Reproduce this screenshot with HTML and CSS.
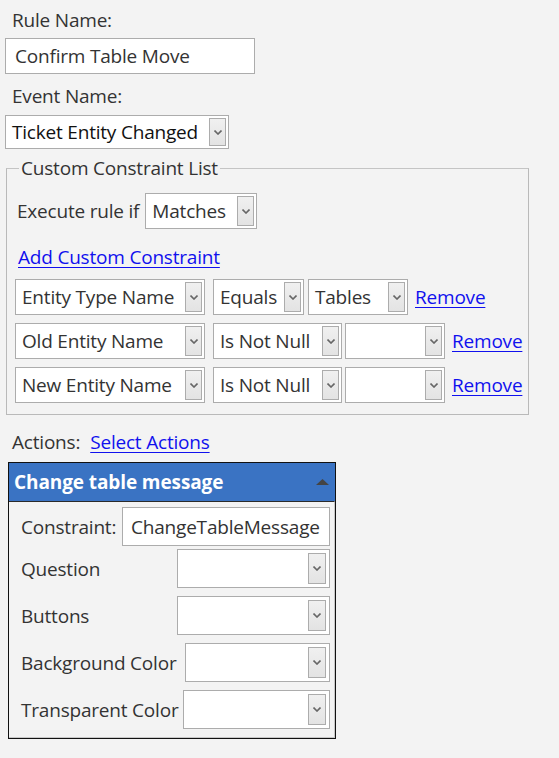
FILE: index.html
```html
<!DOCTYPE html>
<html>
<head>
<meta charset="utf-8">
<link rel="stylesheet" href="styles.css">
</head>
<body>
<div class="page">
  <div class="label l-rule">Rule Name:</div>
  <div class="input rule-input">Confirm Table Move</div>
  <div class="label l-event">Event Name:</div>
  <div class="select event-select"><span class="val">Ticket Entity Changed</span><span class="btn"><svg viewBox="0 0 8 5" width="8" height="5"><path d="M0.5 0.5 L4 4 L7.5 0.5" fill="none" stroke="#666" stroke-width="1.6"/></svg></span></div>

  <fieldset class="constraints">
    <legend>Custom Constraint List</legend>
    <div class="exec-row">
      <span class="exec-label">Execute rule if</span>
      <div class="select exec-select"><span class="val">Matches</span><span class="btn"><svg viewBox="0 0 8 5" width="8" height="5"><path d="M0.5 0.5 L4 4 L7.5 0.5" fill="none" stroke="#666" stroke-width="1.6"/></svg></span></div>
    </div>
    <a class="link add-link" href="#">Add Custom Constraint</a>
    <div class="rows">
      <div class="crow">
        <div class="select s-name"><span class="val">Entity Type Name</span><span class="btn"><svg viewBox="0 0 8 5" width="8" height="5"><path d="M0.5 0.5 L4 4 L7.5 0.5" fill="none" stroke="#666" stroke-width="1.6"/></svg></span></div>
        <div class="select s-op-eq"><span class="val">Equals</span><span class="btn"><svg viewBox="0 0 8 5" width="8" height="5"><path d="M0.5 0.5 L4 4 L7.5 0.5" fill="none" stroke="#666" stroke-width="1.6"/></svg></span></div>
        <div class="select s-value"><span class="val">Tables</span><span class="btn"><svg viewBox="0 0 8 5" width="8" height="5"><path d="M0.5 0.5 L4 4 L7.5 0.5" fill="none" stroke="#666" stroke-width="1.6"/></svg></span></div>
        <a class="link remove" href="#">Remove</a>
      </div>
      <div class="crow">
        <div class="select s-name"><span class="val">Old Entity Name</span><span class="btn"><svg viewBox="0 0 8 5" width="8" height="5"><path d="M0.5 0.5 L4 4 L7.5 0.5" fill="none" stroke="#666" stroke-width="1.6"/></svg></span></div>
        <div class="select s-op-null"><span class="val">Is Not Null</span><span class="btn"><svg viewBox="0 0 8 5" width="8" height="5"><path d="M0.5 0.5 L4 4 L7.5 0.5" fill="none" stroke="#666" stroke-width="1.6"/></svg></span></div>
        <div class="select s-value"><span class="val"></span><span class="btn"><svg viewBox="0 0 8 5" width="8" height="5"><path d="M0.5 0.5 L4 4 L7.5 0.5" fill="none" stroke="#666" stroke-width="1.6"/></svg></span></div>
        <a class="link remove" href="#">Remove</a>
      </div>
      <div class="crow">
        <div class="select s-name"><span class="val">New Entity Name</span><span class="btn"><svg viewBox="0 0 8 5" width="8" height="5"><path d="M0.5 0.5 L4 4 L7.5 0.5" fill="none" stroke="#666" stroke-width="1.6"/></svg></span></div>
        <div class="select s-op-null"><span class="val">Is Not Null</span><span class="btn"><svg viewBox="0 0 8 5" width="8" height="5"><path d="M0.5 0.5 L4 4 L7.5 0.5" fill="none" stroke="#666" stroke-width="1.6"/></svg></span></div>
        <div class="select s-value"><span class="val"></span><span class="btn"><svg viewBox="0 0 8 5" width="8" height="5"><path d="M0.5 0.5 L4 4 L7.5 0.5" fill="none" stroke="#666" stroke-width="1.6"/></svg></span></div>
        <a class="link remove" href="#">Remove</a>
      </div>
    </div>
  </fieldset>

  <div class="actions-row">
    <span class="label">Actions:</span>
    <a class="link" href="#">Select Actions</a>
  </div>

  <div class="panel">
    <div class="panel-head">
      <span class="panel-title">Change table message</span>
      <svg class="collapse" viewBox="0 0 13 6" width="13" height="6"><path d="M0 6 L6.5 0 L13 6 Z" fill="#444"/></svg>
    </div>
    <div class="panel-body">
      <div class="prow r-constraint">
        <span class="plabel">Constraint:</span>
        <div class="input p-input">ChangeTableMessage</div>
      </div>
      <div class="prow r-question">
        <span class="plabel">Question</span>
        <div class="select p-sel w153"><span class="val"></span><span class="btn"><svg viewBox="0 0 8 5" width="8" height="5"><path d="M0.5 0.5 L4 4 L7.5 0.5" fill="none" stroke="#666" stroke-width="1.6"/></svg></span></div>
      </div>
      <div class="prow">
        <span class="plabel">Buttons</span>
        <div class="select p-sel w153"><span class="val"></span><span class="btn"><svg viewBox="0 0 8 5" width="8" height="5"><path d="M0.5 0.5 L4 4 L7.5 0.5" fill="none" stroke="#666" stroke-width="1.6"/></svg></span></div>
      </div>
      <div class="prow">
        <span class="plabel">Background Color</span>
        <div class="select p-sel w145"><span class="val"></span><span class="btn"><svg viewBox="0 0 8 5" width="8" height="5"><path d="M0.5 0.5 L4 4 L7.5 0.5" fill="none" stroke="#666" stroke-width="1.6"/></svg></span></div>
      </div>
      <div class="prow r-last">
        <span class="plabel">Transparent Color</span>
        <div class="select p-sel w147"><span class="val"></span><span class="btn"><svg viewBox="0 0 8 5" width="8" height="5"><path d="M0.5 0.5 L4 4 L7.5 0.5" fill="none" stroke="#666" stroke-width="1.6"/></svg></span></div>
      </div>
    </div>
  </div>
</div>
</body>
</html>
```

FILE: styles.css
```css
html, body {
  margin: 0;
  padding: 0;
  background: #f3f3f3;
}
body {
  font-family: "Open Sans", "Noto Sans", "Liberation Sans", sans-serif;
  font-size: 19px;
  line-height: 26px;
  letter-spacing: -0.2px;
  color: #333;
}
.page {
  display: flex;
  flex-direction: column;
  align-items: flex-start;
  padding: 7px 0 0 5px;
}
.label {
  line-height: 26px;
  padding-left: 7px;
}
.l-event {
  margin-top: 9px;
}
.input {
  box-sizing: border-box;
  background: #fff;
  border: 1px solid #acacac;
  display: flex;
  align-items: center;
  padding-left: 9px;
  color: #333;
}
.rule-input {
  width: 250px;
  height: 36px;
  margin-top: 5px;
}
.select {
  box-sizing: border-box;
  background: #fff;
  border: 1px solid #acacac;
  display: flex;
  align-items: stretch;
  color: #111;
}
.select .val {
  flex: 1;
  display: flex;
  align-items: center;
  padding-left: 6px;
  white-space: nowrap;
  overflow: hidden;
}
.select .btn {
  box-sizing: border-box;
  width: 17px;
  margin: 2px 2px 2px 0;
  border: 1px solid #acacac;
  background: linear-gradient(#f0f0f0, #e3e3e3);
  display: flex;
  align-items: center;
  justify-content: center;
}
.event-select {
  width: 224px;
  height: 34px;
  margin-top: 6px;
}
.constraints {
  box-sizing: border-box;
  width: 523px;
  margin: 6px 0 0 1px;
  padding: 12px 0 11px 8px;
  border: 1px solid #b9b9b9;
  border-top-color: #c4c4c4;
}
.constraints legend {
  padding: 0 2px;
  margin-left: 4px;
  line-height: 26px;
  color: #333;
}
.exec-row {
  display: flex;
  align-items: center;
  gap: 6px;
}
.exec-label {
  padding-left: 2px;
}
.exec-select {
  width: 112px;
  height: 36px;
}
.exec-select .val {
  color: #333;
}
.link {
  color: #1010ee;
  text-decoration: underline;
  text-underline-offset: 3px;
  line-height: 26px;
}
.add-link {
  display: inline-block;
  margin: 15px 0 0 3px;
}
.rows {
  display: flex;
  flex-direction: column;
  gap: 8px;
  margin-top: 9px;
}
.crow {
  display: flex;
  align-items: center;
}
.crow .select {
  height: 36px;
}
.crow .val {
  color: #333;
}
.s-name {
  width: 190px;
  margin-right: 8px;
}
.s-op-eq {
  width: 91px;
  margin-right: 4px;
}
.s-op-null {
  width: 129px;
  margin-right: 3px;
}
.s-value {
  width: 100px;
  margin-right: 7px;
}
.actions-row {
  display: flex;
  align-items: center;
  gap: 10px;
  margin-top: 14px;
}
.actions-row .label {
  padding-left: 7px;
}
.panel {
  box-sizing: border-box;
  width: 328px;
  margin: 7px 0 0 3px;
  border: 1px solid #111;
  background: #f3f3f3;
}
.panel-head {
  height: 38px;
  background: #3a73c3;
  display: flex;
  align-items: center;
  justify-content: space-between;
  padding: 0 6px 0 5px;
}
.panel-title {
  color: #fff;
  font-weight: 700;
  letter-spacing: -0.1px;
}
.panel-body {
  border-top: 1px solid #2a2a2a;
  border-right: 1px solid #c8c8c8;
  border-bottom: 1px solid #c8c8c8;
  padding: 5px 4px 8px 12px;
  display: flex;
  flex-direction: column;
  gap: 8px;
}
.prow {
  display: flex;
  align-items: center;
  justify-content: space-between;
}
.r-constraint {
  margin-bottom: -5px;
}
.plabel {
  color: #333;
}
.p-input {
  width: 208px;
  height: 39px;
  padding-left: 8px;
}
.p-sel {
  height: 39px;
}
.p-sel .btn {
  width: 18px;
  margin: 3px 3px 3px 0;
}
.w153 { width: 153px; }
.w145 { width: 145px; }
.w147 { width: 147px; }
```
